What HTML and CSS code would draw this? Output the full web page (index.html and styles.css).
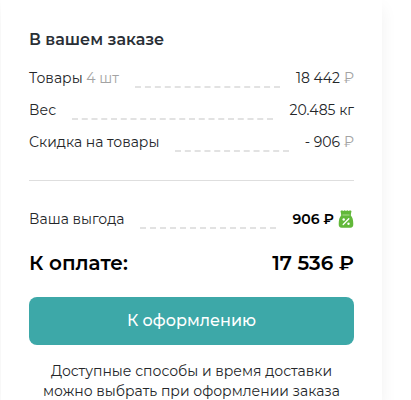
FILE: index.html
```html
<!DOCTYPE html>
<html lang="ru">
<head>
<meta charset="utf-8">
<meta name="viewport" content="width=device-width, initial-scale=1">
<title>В вашем заказе</title>
<link rel="stylesheet" href="styles.css">
</head>
<body>
<main class="summary">
  <h1 class="title">В вашем заказе</h1>
  <dl class="rows">
    <div class="row"><dt>Товары <span class="muted">4 шт</span></dt><dd>18 442 <span class="muted">₽</span></dd></div>
    <div class="row"><dt>Вес</dt><dd>20.485 кг</dd></div>
    <div class="row"><dt>Скидка на товары</dt><dd>- 906 <span class="muted">₽</span></dd></div>
  </dl>
  <dl class="rows benefit">
    <div class="row">
      <dt>Ваша выгода</dt>
      <dd class="bonus">906 ₽
        <svg class="bag" viewBox="0 0 16 20" aria-hidden="true">
          <path fill="#62b83a" d="M2.500 2L4 1.200L5.200 2L6.700 1.200L8 2L9.300 1.200L10.800 2L12 1.200L13.500 2L13 4.500L12.800 6.500C14.500 8 15.300 11 15.300 15C15.300 17.600 14.500 18.800 12.300 18.800H3.700C1.500 18.800 .7 17.600 .7 15C.7 11 1.500 8 3.200 6.500L3 4.500Z"/>
          <path d="M4.500 6H11.500" stroke="#94d073" stroke-width="1.500"/>
          <path d="M5.200 15.500L10.800 9.700" stroke="#fff" stroke-width="1.300" stroke-linecap="round"/>
          <circle cx="5.700" cy="10.500" r="1.200" fill="#fff"/>
          <circle cx="10.500" cy="14.800" r="1.200" fill="#fff"/>
        </svg>
      </dd>
    </div>
    <div class="total"><dt>К оплате:</dt><dd>17 536 ₽</dd></div>
  </dl>
  <button class="checkout" type="button">К оформлению</button>
  <p class="note">Доступные способы и время доставки можно выбрать при оформлении заказа</p>
</main>
</body>
</html>
```
FILE: styles.css
```css
* {
  box-sizing: border-box;
}

body {
  margin: 0;
  padding: 0 29px 0 1px;
  background: #fff;
  color: #242629;
  font: 14px/20px Montserrat, Inter, "Open Sans", sans-serif;
  overflow: hidden;
}

.summary {
  padding: 28px 28px 0;
  background: #fff;
  box-shadow: 0 8px 16px rgba(0, 0, 0, 0.06);
}

.title {
  margin: 0 0 16px;
  color: #2a2f36;
  font-size: 16px;
  line-height: 24px;
  font-weight: 600;
}

.rows {
  display: flex;
  flex-direction: column;
  gap: 12px;
  margin: 0;
}

.row {
  display: flex;
  gap: 16px;
}

.row::before {
  content: "";
  order: 1;
  flex: 1;
  border-bottom: 2px dashed #e2e2e2;
}

.row dd {
  order: 2;
}

dd {
  margin: 0;
}

.muted {
  color: #a3a3a3;
}

.benefit {
  gap: 20px;
  margin-top: 28px;
  padding-top: 28px;
  border-top: 1px solid #dedede;
}

.bonus {
  display: flex;
  align-items: center;
  gap: 4px;
  color: #000;
  font-weight: 600;
}

.bag {
  width: 16px;
  height: 20px;
}

.total {
  display: flex;
  justify-content: space-between;
  color: #000;
  font-size: 20px;
  line-height: 28px;
  font-weight: 600;
}

.checkout {
  display: block;
  width: 100%;
  height: 48px;
  margin: 20px 0 16px;
  padding: 0;
  border: 0;
  border-radius: 8px;
  background: #3da8a8;
  color: #fff;
  font: inherit;
  font-size: 16px;
  font-weight: 500;
}

.note {
  margin: 0;
  text-align: center;
}
```
